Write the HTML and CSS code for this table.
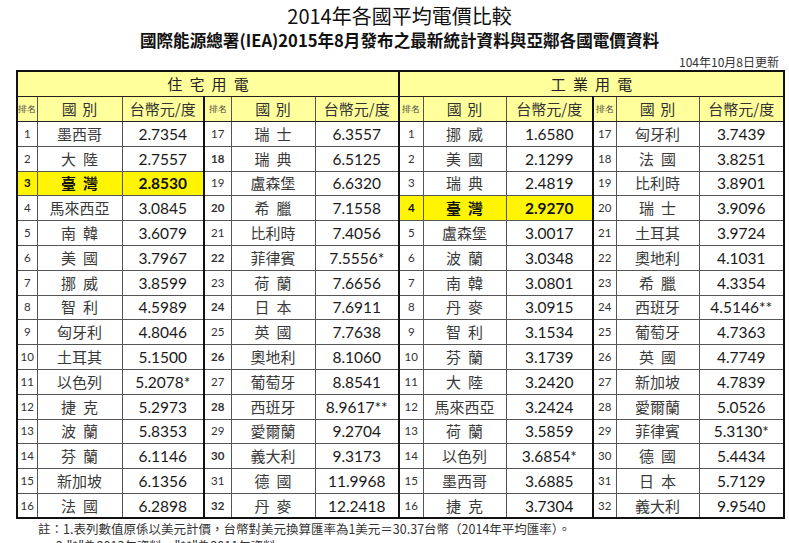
FILE: index.html
```html
<!DOCTYPE html>
<html lang="zh-Hant">
<head>
<meta charset="utf-8">
<title>2014年各國平均電價比較</title>
<link rel="stylesheet" href="styles.css">
</head>
<body>
<div class="sheet">
  <h1 class="title">2014年各國平均電價比較</h1>
  <h2 class="subtitle">國際能源總署(IEA)2015年8月發布之最新統計資料與亞鄰各國電價資料</h2>
  <div class="date">104年10月8日更新</div>
  <table class="grid">
    <colgroup>
      <col class="c-r1"><col class="c-n1"><col class="c-p1">
      <col class="c-r2"><col class="c-n2"><col class="c-p2">
      <col class="c-r3"><col class="c-n3"><col class="c-p3">
      <col class="c-r4"><col class="c-n4"><col class="c-p4">
    </colgroup>
    <thead>
      <tr class="band">
        <th colspan="6" class="half">住 宅 用 電</th>
        <th colspan="6">工 業 用 電</th>
      </tr>
      <tr class="sub">
        <th class="rk">排名</th><th>國 別</th><th class="div">台幣元/度</th>
        <th class="rk">排名</th><th>國 別</th><th class="half">台幣元/度</th>
        <th class="rk">排名</th><th>國 別</th><th class="div">台幣元/度</th>
        <th class="rk">排名</th><th>國 別</th><th>台幣元/度</th>
      </tr>
    </thead>
    <tbody>
      <tr>
        <td class="rk">1</td><td class="nm">墨西哥</td><td class="pr div">2.7354</td>
        <td class="rk">17</td><td class="nm">瑞 士</td><td class="pr half">6.3557</td>
        <td class="rk">1</td><td class="nm">挪 威</td><td class="pr div">1.6580</td>
        <td class="rk">17</td><td class="nm">匈牙利</td><td class="pr">3.7439</td>
      </tr>
      <tr>
        <td class="rk">2</td><td class="nm">大 陸</td><td class="pr div">2.7557</td>
        <td class="rk b">18</td><td class="nm">瑞 典</td><td class="pr half">6.5125</td>
        <td class="rk">2</td><td class="nm">美 國</td><td class="pr div">2.1299</td>
        <td class="rk">18</td><td class="nm">法 國</td><td class="pr">3.8251</td>
      </tr>
      <tr>
        <td class="rk hl">3</td><td class="nm hl">臺 灣</td><td class="pr div hl">2.8530</td>
        <td class="rk">19</td><td class="nm">盧森堡</td><td class="pr half">6.6320</td>
        <td class="rk">3</td><td class="nm">瑞 典</td><td class="pr div">2.4819</td>
        <td class="rk">19</td><td class="nm">比利時</td><td class="pr">3.8901</td>
      </tr>
      <tr>
        <td class="rk">4</td><td class="nm">馬來西亞</td><td class="pr div">3.0845</td>
        <td class="rk b">20</td><td class="nm">希 臘</td><td class="pr half">7.1558</td>
        <td class="rk hl">4</td><td class="nm hl">臺 灣</td><td class="pr div hl">2.9270</td>
        <td class="rk">20</td><td class="nm">瑞 士</td><td class="pr">3.9096</td>
      </tr>
      <tr>
        <td class="rk">5</td><td class="nm">南 韓</td><td class="pr div">3.6079</td>
        <td class="rk">21</td><td class="nm">比利時</td><td class="pr half">7.4056</td>
        <td class="rk">5</td><td class="nm">盧森堡</td><td class="pr div">3.0017</td>
        <td class="rk">21</td><td class="nm">土耳其</td><td class="pr">3.9724</td>
      </tr>
      <tr>
        <td class="rk">6</td><td class="nm">美 國</td><td class="pr div">3.7967</td>
        <td class="rk b">22</td><td class="nm">菲律賓</td><td class="pr half">7.5556*</td>
        <td class="rk">6</td><td class="nm">波 蘭</td><td class="pr div">3.0348</td>
        <td class="rk">22</td><td class="nm">奧地利</td><td class="pr">4.1031</td>
      </tr>
      <tr>
        <td class="rk">7</td><td class="nm">挪 威</td><td class="pr div">3.8599</td>
        <td class="rk">23</td><td class="nm">荷 蘭</td><td class="pr half">7.6656</td>
        <td class="rk">7</td><td class="nm">南 韓</td><td class="pr div">3.0801</td>
        <td class="rk">23</td><td class="nm">希 臘</td><td class="pr">4.3354</td>
      </tr>
      <tr>
        <td class="rk">8</td><td class="nm">智 利</td><td class="pr div">4.5989</td>
        <td class="rk b">24</td><td class="nm">日 本</td><td class="pr half">7.6911</td>
        <td class="rk">8</td><td class="nm">丹 麥</td><td class="pr div">3.0915</td>
        <td class="rk">24</td><td class="nm">西班牙</td><td class="pr">4.5146**</td>
      </tr>
      <tr>
        <td class="rk">9</td><td class="nm">匈牙利</td><td class="pr div">4.8046</td>
        <td class="rk">25</td><td class="nm">英 國</td><td class="pr half">7.7638</td>
        <td class="rk">9</td><td class="nm">智 利</td><td class="pr div">3.1534</td>
        <td class="rk">25</td><td class="nm">葡萄牙</td><td class="pr">4.7363</td>
      </tr>
      <tr>
        <td class="rk">10</td><td class="nm">土耳其</td><td class="pr div">5.1500</td>
        <td class="rk b">26</td><td class="nm">奧地利</td><td class="pr half">8.1060</td>
        <td class="rk">10</td><td class="nm">芬 蘭</td><td class="pr div">3.1739</td>
        <td class="rk">26</td><td class="nm">英 國</td><td class="pr">4.7749</td>
      </tr>
      <tr>
        <td class="rk">11</td><td class="nm">以色列</td><td class="pr div">5.2078*</td>
        <td class="rk">27</td><td class="nm">葡萄牙</td><td class="pr half">8.8541</td>
        <td class="rk">11</td><td class="nm">大 陸</td><td class="pr div">3.2420</td>
        <td class="rk">27</td><td class="nm">新加坡</td><td class="pr">4.7839</td>
      </tr>
      <tr>
        <td class="rk">12</td><td class="nm">捷 克</td><td class="pr div">5.2973</td>
        <td class="rk b">28</td><td class="nm">西班牙</td><td class="pr half">8.9617**</td>
        <td class="rk">12</td><td class="nm">馬來西亞</td><td class="pr div">3.2424</td>
        <td class="rk">28</td><td class="nm">愛爾蘭</td><td class="pr">5.0526</td>
      </tr>
      <tr>
        <td class="rk">13</td><td class="nm">波 蘭</td><td class="pr div">5.8353</td>
        <td class="rk">29</td><td class="nm">愛爾蘭</td><td class="pr half">9.2704</td>
        <td class="rk">13</td><td class="nm">荷 蘭</td><td class="pr div">3.5859</td>
        <td class="rk">29</td><td class="nm">菲律賓</td><td class="pr">5.3130*</td>
      </tr>
      <tr>
        <td class="rk">14</td><td class="nm">芬 蘭</td><td class="pr div">6.1146</td>
        <td class="rk b">30</td><td class="nm">義大利</td><td class="pr half">9.3173</td>
        <td class="rk">14</td><td class="nm">以色列</td><td class="pr div">3.6854*</td>
        <td class="rk">30</td><td class="nm">德 國</td><td class="pr">5.4434</td>
      </tr>
      <tr>
        <td class="rk">15</td><td class="nm">新加坡</td><td class="pr div">6.1356</td>
        <td class="rk">31</td><td class="nm">德 國</td><td class="pr half">11.9968</td>
        <td class="rk">15</td><td class="nm">墨西哥</td><td class="pr div">3.6885</td>
        <td class="rk">31</td><td class="nm">日 本</td><td class="pr">5.7129</td>
      </tr>
      <tr>
        <td class="rk">16</td><td class="nm">法 國</td><td class="pr div">6.2898</td>
        <td class="rk b">32</td><td class="nm">丹 麥</td><td class="pr half">12.2418</td>
        <td class="rk">16</td><td class="nm">捷 克</td><td class="pr div">3.7304</td>
        <td class="rk">32</td><td class="nm">義大利</td><td class="pr">9.9540</td>
      </tr>
    </tbody>
  </table>
  <div class="notes">
    <p class="note1">註：1.表列數值原係以美元計價，台幣對美元換算匯率為1美元＝30.37台幣（2014年平均匯率）。</p>
    <p class="note2">2."*"為2013年資料，"**"為2011年資料。</p>
  </div>
</div>
</body>
</html>
```

FILE: styles.css
```css
html, body {
  margin: 0;
  padding: 0;
  background: #ffffff;
}

body {
  width: 789px;
  height: 543px;
  overflow: hidden;
  color: #222;
  font-family: "Noto Sans CJK TC", "Noto Sans", sans-serif;
}

.sheet {
  width: 767px;
  margin-left: 16px;
}

.title {
  margin: 4px 0 0;
  text-align: center;
  font: 400 20px/24px "Noto Sans CJK TC", sans-serif;
  color: #111;
}

.subtitle {
  margin: 2px 0 0;
  text-align: center;
  font: 700 16.6px/20px "Noto Sans CJK TC", sans-serif;
  color: #111;
}

.date {
  margin-top: 5px;
  height: 15px;
  padding-right: 4px;
  text-align: right;
  font: 400 12px/14px "Noto Sans CJK TC", sans-serif;
  color: #333;
}

.grid {
  width: 767px;
  table-layout: fixed;
  border-collapse: collapse;
  border: 2px solid #111;
}

.c-r1 { width: 20px; }
.c-n1 { width: 85px; }
.c-p1 { width: 82px; }
.c-r2 { width: 27px; }
.c-n2 { width: 84px; }
.c-p2 { width: 84px; }
.c-r3 { width: 24px; }
.c-n3 { width: 83px; }
.c-p3 { width: 87px; }
.c-r4 { width: 23px; }
.c-n4 { width: 83px; }
.c-p4 { width: 85px; }

.grid th,
.grid td {
  border: 1px solid #555;
  padding: 0;
  text-align: center;
  vertical-align: middle;
  white-space: nowrap;
  overflow: hidden;
}

.band th {
  height: 24px;
  background: #ffff9c;
  font: 400 15px/20px "Noto Sans CJK TC", sans-serif;
  word-spacing: 0.25em;
  color: #222;
  border-bottom: 1px solid #222;
}

.sub th {
  height: 24px;
  background: #ffff9c;
  font: 400 15px/20px "Noto Sans CJK TC", sans-serif;
  word-spacing: 0.15em;
  color: #333;
  border-bottom: 1px solid #222;
}

.sub th.rk {
  font-size: 9px;
  word-spacing: 0;
  color: #444;
}

.grid tbody tr {
  height: 24.8px;
}

.grid .rk {
  font: 400 11.5px/16px Lato, "Liberation Sans", sans-serif;
  color: #333;
}

.grid .rk.b {
  font-weight: 700;
}

.grid .nm {
  font: 400 15px/20px "Noto Sans CJK TC", sans-serif;
  word-spacing: 0.25em;
  color: #3a3a3a;
}

.grid .pr {
  font: 400 15.5px/20px Lato, "Liberation Sans", sans-serif;
  color: #1a1a1a;
}

.grid .div {
  border-right: 2px solid #111;
}

.grid .half {
  border-right: 2px solid #111;
}

.grid .hl {
  background: #fff500;
  font-weight: 700;
  color: #111;
}

.notes {
  margin-top: 1px;
  font: 400 12.5px/17px "Noto Sans CJK TC", sans-serif;
  color: #333;
}

.notes p {
  margin: 0;
  white-space: nowrap;
}

.note1 {
  padding-left: 22px;
}

.note2 {
  padding-left: 40px;
}
```
